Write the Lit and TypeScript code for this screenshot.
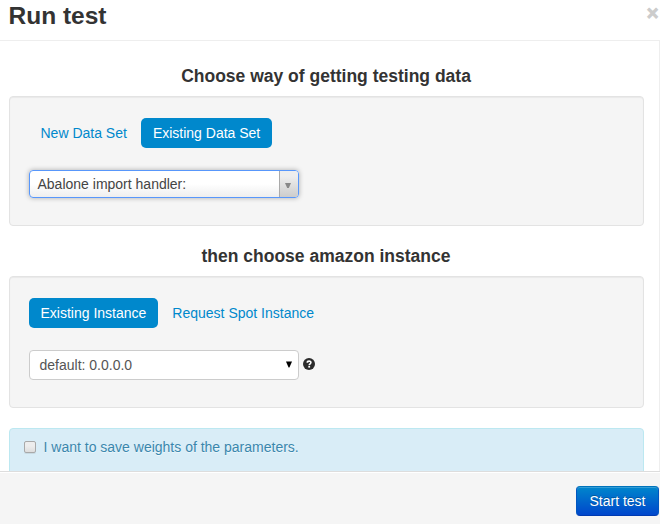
import { LitElement, html, css } from "lit";
import { customElement } from "lit/decorators.js";

@customElement("app-root")
export class AppRoot extends LitElement {
  static styles = css`
    :host {
      display: block;
      font: 14px/20px "Liberation Sans", Arial, sans-serif;
      color: #333;
    }
    * {
      box-sizing: border-box;
    }
    .modal {
      width: 660px;
      height: 524px;
      overflow: hidden;
      background: #fff;
      display: flex;
      flex-direction: column;
    }
    .header {
      display: flex;
      justify-content: space-between;
      height: 41px;
      flex: none;
      padding: 0 1.5px 0 8.5px;
      border-bottom: 1px solid #eee;
    }
    h3 {
      margin: 0;
      font-size: 24.5px;
      line-height: 31px;
    }
    .close {
      margin-top: 3px;
      font-size: 20px;
      font-weight: bold;
      line-height: 20px;
      height: 20px;
      color: #ccc;
      -webkit-text-stroke: 0.9px #ccc;
    }
    .body {
      height: 430px;
      flex: none;
      overflow: hidden;
      padding: 15px 15px 0 9px;
      border-right: 1px solid #eee;
    }
    h4 {
      margin: 10px 0;
      padding-right: 1px;
      font-size: 17.5px;
      line-height: 20px;
      text-align: center;
    }
    .well {
      height: 130px;
      margin-bottom: 20px;
      padding: 21px 19px;
      border: 1px solid #e3e3e3;
      border-radius: 4px;
      background: #f5f5f5;
      box-shadow: inset 0 1px 1px rgba(0, 0, 0, 0.05);
    }
    .well.tall {
      height: 132px;
    }
    .pills {
      display: flex;
      gap: 2px;
      margin-bottom: 22px;
    }
    .pill {
      padding: 8px 12px 8px 11.5px;
      line-height: 14px;
      border-radius: 5px;
      color: #08c;
    }
    .pill + .pill {
      padding: 8px 11.5px 8px 12px;
    }
    .pill.active {
      background: #08c;
      color: #fff;
    }
    .chosen {
      display: flex;
      width: 270px;
      height: 28px;
      border: 1px solid #5897fb;
      border-radius: 4px;
      background: linear-gradient(#fff 50%, #eee 100%);
      box-shadow: 0 0 5px rgba(0, 0, 0, 0.3);
      overflow: hidden;
    }
    .chosen span {
      flex: 1;
      padding-left: 7.5px;
      line-height: 26px;
      color: #444;
    }
    .chosen i {
      display: flex;
      align-items: center;
      justify-content: center;
      width: 19px;
      padding: 2px 2px 0 0;
      border-left: 1px solid #aaa;
      background: linear-gradient(#eee 20%, #ccc 100%);
    }
    svg {
      display: block;
    }
    .row {
      display: flex;
      gap: 4px;
    }
    .select {
      display: flex;
      align-items: center;
      justify-content: space-between;
      width: 270px;
      height: 30px;
      padding: 0 6px 0 9.5px;
      border: 1px solid #ccc;
      border-radius: 4px;
      background: #fff;
      color: #555;
    }
    .select svg {
      margin-top: -1px;
    }
    .help {
      margin-top: 8px;
    }
    .alert {
      display: flex;
      height: 60px;
      padding: 8px 14px;
      border: 1px solid #bce8f1;
      border-radius: 4px;
      background: #d9edf7;
      color: #3a87ad;
      text-shadow: 0 1px 0 rgba(255, 255, 255, 0.5);
    }
    .check {
      width: 12px;
      height: 12px;
      margin: 4px 7.5px 0 0;
      border: 1px solid #a9a9a9;
      border-radius: 2px;
      background: linear-gradient(#ededed 38%, #dedede);
      box-shadow: 0 1px 0 rgba(0, 0, 0, 0.08);
    }
    .footer {
      display: flex;
      justify-content: flex-end;
      flex: 1;
      padding: 14px 1px 0;
      border-top: 1px solid #ddd;
      background: #f5f5f5;
      box-shadow: inset 0 1px 0 #fff;
    }
    .btn {
      width: 83px;
      height: 30px;
      padding: 0;
      font: inherit;
      line-height: 28px;
      color: #fff;
      border: 1px solid;
      border-color: #0073bb #0056c0 #003ab0;
      border-radius: 4px;
      background: linear-gradient(#08c, #04c) border-box;
      text-shadow: 0 -1px 0 rgba(0, 0, 0, 0.25);
      box-shadow: inset 0 1px 0 rgba(255, 255, 255, 0.2);
    }
  `;

  render() {
    return html`
      <div class="modal">
        <div class="header">
          <h3>Run test</h3>
          <span class="close">×</span>
        </div>
        <div class="body">
          <h4>Choose way of getting testing data</h4>
          <div class="well">
            <div class="pills">
              <a class="pill">New Data Set</a>
              <a class="pill active">Existing Data Set</a>
            </div>
            <div class="chosen">
              <span>Abalone import handler:</span>
              <i><svg width="6" height="5"><path d="M0 0H6L3.8 5H2.2Z" fill="#888" /></svg></i>
            </div>
          </div>
          <h4>then choose amazon instance</h4>
          <div class="well tall">
            <div class="pills">
              <a class="pill active">Existing Instance</a>
              <a class="pill">Request Spot Instance</a>
            </div>
            <div class="row">
              <div class="select">
                <span>default: 0.0.0.0</span>
                <svg width="6" height="7"><path d="M0 .5H6L3.4 6.5H2.6Z" fill="#000" /></svg>
              </div>
              <svg class="help" width="12" height="12" viewBox="0 0 12 12">
                <circle cx="6" cy="6" r="6" fill="#2b2b2b" />
                <path d="M4.3 4.7C4.3 2.6 7.9 2.6 7.9 4.6C7.9 5.9 6.2 5.7 6.2 7.2" fill="none" stroke="#fff" stroke-width="1.6" />
                <rect x="5.3" y="8" width="1.8" height="1.6" fill="#fff" />
              </svg>
            </div>
          </div>
          <div class="alert">
            <span class="check"></span>
            <span>I want to save weights of the parameters.</span>
          </div>
        </div>
        <div class="footer"><button class="btn">Start test</button></div>
      </div>
    `;
  }
}
